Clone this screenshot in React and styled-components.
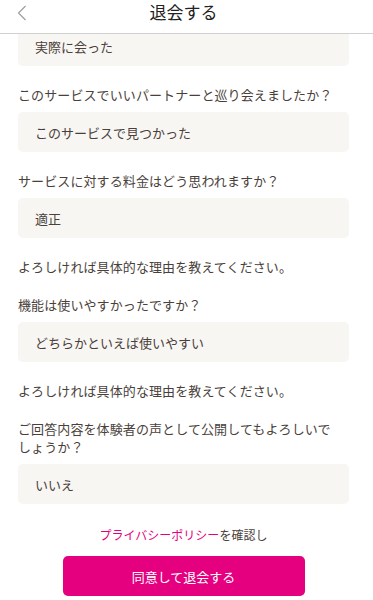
import { useLayoutEffect, useRef } from "react";
import styled, { createGlobalStyle } from "styled-components";

const GlobalStyle = createGlobalStyle`
  html, body {
    margin: 0;
    padding: 0;
    background: #fff;
  }
  body {
    font-family: "Noto Sans CJK JP", "Noto Sans", sans-serif;
    color: #4a3f3b;
  }
`;

const Page = styled.div`
  display: flex;
  flex-direction: column;
  height: 100vh;
  overflow: hidden;
`;

const Header = styled.header`
  position: relative;
  flex-shrink: 0;
  height: 33px;
  border-bottom: 1px solid #d0d0d0;
  display: flex;
  justify-content: center;
  align-items: flex-start;
  padding-right: 6px;
`;

const BackButton = styled.button`
  position: absolute;
  left: 14px;
  top: 3px;
  width: 16px;
  height: 20px;
  padding: 0;
  border: 0;
  background: none;
  display: flex;
  align-items: center;
  justify-content: center;
`;

const Title = styled.h1`
  margin: 0;
  font-size: 17px;
  line-height: 23px;
  font-weight: 400;
  color: #222;
`;

// 스크롤 영역 (스크롤바는 숨김)
const Scroller = styled.div`
  flex: 1;
  overflow-y: auto;
  scrollbar-width: none;
  &::-webkit-scrollbar {
    display: none;
  }
`;

const Content = styled.div`
  padding: 0 24px 40px 18px;
`;

const Group = styled.div`
  margin-top: ${(p) => (p.$first ? 0 : 20)}px;
`;

const Label = styled.p`
  margin: 0 0 8px;
  font-size: 13px;
  line-height: 18px;
  letter-spacing: 0.1px;
  color: #4a3f3b;
  line-break: strict;
  &:last-child {
    margin-bottom: 0;
  }
`;

const AnswerBox = styled.div`
  height: 40px;
  display: flex;
  align-items: center;
  padding: 0 17px;
  background: #f8f6f2;
  border-radius: 5px;
  font-size: 13px;
  color: #4a3f3b;
`;

const PolicyNote = styled.p`
  margin: 22px 0 0;
  text-align: center;
  font-size: 12px;
  line-height: 18px;
  color: #4a3f3b;
`;

const PolicyLink = styled.a`
  color: #e4007f;
  text-decoration: none;
`;

const SubmitButton = styled.button`
  display: block;
  margin: 12px auto 0;
  width: 242px;
  height: 40px;
  border: 0;
  border-radius: 5px;
  background: #e4007f;
  color: #fff;
  font-family: inherit;
  font-size: 13px;
`;

const items = [
  { label: null, answer: "実際に会った" },
  { label: "このサービスでいいパートナーと巡り会えましたか？", answer: "このサービスで見つかった" },
  { label: "サービスに対する料金はどう思われますか？", answer: "適正" },
  { label: "よろしければ具体的な理由を教えてください。", answer: null },
  { label: "機能は使いやすかったですか？", answer: "どちらかといえば使いやすい" },
  { label: "よろしければ具体的な理由を教えてください。", answer: null },
  {
    label: "ご回答内容を体験者の声として公開してもよろしいでしょうか？",
    answer: "いいえ",
  },
];

const App = () => {
  const scrollRef = useRef(null);

  // 위쪽 질문이 가려진 상태로 스크롤
  useLayoutEffect(() => {
    if (scrollRef.current) scrollRef.current.scrollTop = 8;
  }, []);

  return (
    <>
      <GlobalStyle />
      <Page lang="ja">
        <Header>
          <BackButton aria-label="戻る">
            <svg width="10" height="16" viewBox="0 0 10 16">
              <path d="M8.5 1 L1.5 8 L8.5 15" fill="none" stroke="#9a9a9a" strokeWidth="1.1" />
            </svg>
          </BackButton>
          <Title>退会する</Title>
        </Header>
        <Scroller ref={scrollRef}>
          <Content>
            {items.map((item, i) => (
              <Group key={i} $first={i === 0}>
                {item.label && <Label>{item.label}</Label>}
                {item.answer && <AnswerBox>{item.answer}</AnswerBox>}
              </Group>
            ))}
            <PolicyNote>
              <PolicyLink href="#">プライバシーポリシー</PolicyLink>を確認し
            </PolicyNote>
            <SubmitButton>同意して退会する</SubmitButton>
          </Content>
        </Scroller>
      </Page>
    </>
  );
};

export default App;
